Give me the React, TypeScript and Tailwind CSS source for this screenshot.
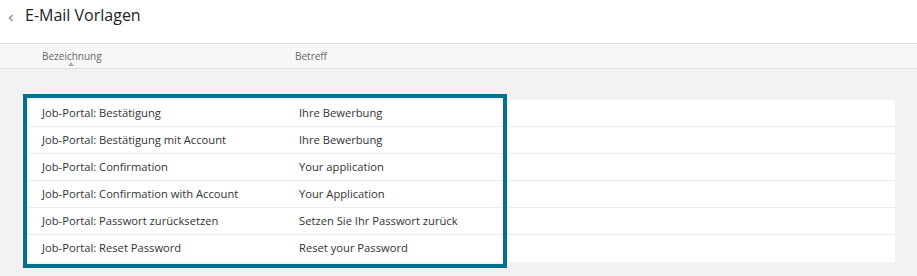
import React from 'react'

const rows = [
  { name: 'Job-Portal: Bestätigung', subject: 'Ihre Bewerbung' },
  { name: 'Job-Portal: Bestätigung mit Account', subject: 'Ihre Bewerbung' },
  { name: 'Job-Portal: Confirmation', subject: 'Your application' },
  { name: 'Job-Portal: Confirmation with Account', subject: 'Your Application' },
  { name: 'Job-Portal: Passwort zurücksetzen', subject: 'Setzen Sie Ihr Passwort zurück' },
  { name: 'Job-Portal: Reset Password', subject: 'Reset your Password' },
]

export default function App() {
  return (
    <div className="w-[917px] h-[276px] bg-[#f2f2f2] font-['Open_Sans',sans-serif] text-[#333] overflow-hidden">
      {/* Title bar */}
      <div className="h-[44px] bg-white border-b border-[#e0e0e0] flex items-start pt-[5px]">
        <svg width="6" height="8" viewBox="0 0 6 8" className="ml-[8px] mt-[9px]">
          <path d="M4.5 1 L1.5 4 L4.5 7" fill="none" stroke="#9a9a9a" strokeWidth="1.6" />
        </svg>
        <h1 className="ml-[11px] text-[16px] leading-[20px] text-[#222]">E-Mail Vorlagen</h1>
      </div>

      {/* Column header */}
      <div className="h-[25px] bg-[#f7f7f7] border-b border-[#e0e0e0] flex text-[10px] text-[#666]">
        <div className="relative w-[295px] pl-[42px] pt-[5px]">
          Bezeichnung
          <span className="absolute left-[68px] top-[18px] w-0 h-0 border-l-[3px] border-r-[3px] border-b-[4px] border-l-transparent border-r-transparent border-b-[#aaa]" />
        </div>
        <div className="pt-[5px]">Betreff</div>
      </div>

      {/* Body */}
      <div className="relative pt-[31px] pl-[27px] pr-[22px]">
        <div className="bg-white">
          {rows.map((r, i) => (
            <div
              key={i}
              className={`h-[27px] flex items-center text-[11.2px] ${i < rows.length - 1 ? 'border-b border-[#ececec]' : ''}`}
            >
              <div className="w-[257px] pl-[15px]">{r.name}</div>
              <div className="pl-[15px]">{r.subject}</div>
            </div>
          ))}
        </div>
        {/* highlight frame */}
        <div className="absolute left-[23px] top-[25px] w-[484px] h-[174px] border-[4px] border-[#03708f] pointer-events-none" />
      </div>
    </div>
  )
}
